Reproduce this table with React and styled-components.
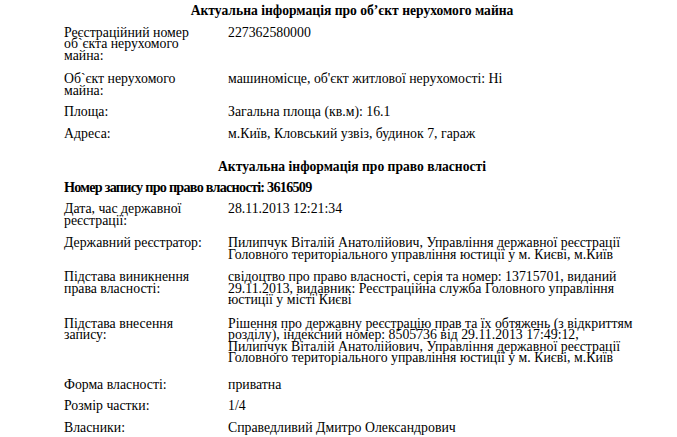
import React from 'react';
import styled, { createGlobalStyle } from 'styled-components';

const GlobalStyle = createGlobalStyle`
  html, body {
    margin: 0;
    padding: 0;
    background: #ffffff;
  }
`;

const Page = styled.div`
  width: 576px;
  margin-left: 64px;
  font-family: "Liberation Serif", "Times New Roman", serif;
  color: #000000;
  font-size: 13.8px;
  line-height: 11.5px;
`;

const Title = styled.div`
  text-align: center;
  font-weight: bold;
  font-size: 13.6px;
  padding: 5px 0;
  margin-top: ${(p) => p.$top || 0}px;
`;

const RecordNo = styled.div`
  font-weight: bold;
  font-size: 14.2px;
  letter-spacing: -0.75px;
  padding: 5px 0;
  margin-top: -1px;
`;

const Row = styled.div`
  display: grid;
  grid-template-columns: 164px 1fr;
  padding: 5px 0;
  margin-top: ${(p) => p.$extra || 0}px;
`;

const Label = styled.div`
  white-space: nowrap;
`;

const Value = styled.div`
  white-space: nowrap;
`;

const lines = (arr) =>
  arr.map((t, i) => (
    <React.Fragment key={i}>
      {i > 0 && <br />}
      {t}
    </React.Fragment>
  ));

const objectRows = [
  { label: ['Реєстраційний номер', 'об`єкта нерухомого', 'майна:'], value: ['227362580000'] },
  { label: ['Об`єкт нерухомого', 'майна:'], value: ["машиномісце, об'єкт житлової нерухомості: Ні"], extra: 2 },
  { label: ['Площа:'], value: ['Загальна площа (кв.м): 16.1'] },
  { label: ['Адреса:'], value: ['м.Київ, Кловський узвіз, будинок 7, гараж'] },
];

const rightRows = [
  { label: ['Дата, час державної', 'реєстрації:'], value: ['28.11.2013 12:21:34'] },
  {
    label: ['Державний реєстратор:'],
    value: [
      'Пилипчук Віталій Анатолійович, Управління державної реєстрації',
      'Головного територіального управління юстиції у м. Києві, м.Київ',
    ],
    extra: 1,
  },
  {
    label: ['Підстава виникнення', 'права власності:'],
    value: [
      'свідоцтво про право власності, серія та номер: 13715701, виданий',
      '29.11.2013, видавник: Реєстраційна служба Головного управління',
      'юстиції у місті Києві',
    ],
    extra: 1,
  },
  {
    label: ['Підстава внесення', 'запису:'],
    value: [
      'Рішення про державну реєстрацію прав та їх обтяжень (з відкриттям',
      'розділу), індексний номер: 8505736 від 29.11.2013 17:49:12,',
      'Пилипчук Віталій Анатолійович, Управління державної реєстрації',
      'Головного територіального управління юстиції у м. Києві, м.Київ',
    ],
    extra: 2,
  },
  { label: ['Форма власності:'], value: ['приватна'], extra: 5 },
  { label: ['Розмір частки:'], value: ['1/4'] },
  { label: ['Власники:'], value: ['Справедливий Дмитро Олександрович'] },
];

const App = () => {
  return (
    <>
      <GlobalStyle />
      <Page>
        <Title>Актуальна інформація про об’єкт нерухомого майна</Title>
        {objectRows.map((r, i) => (
          <Row key={i} $extra={r.extra}>
            <Label>{lines(r.label)}</Label>
            <Value>{lines(r.value)}</Value>
          </Row>
        ))}
        <Title $top={12}>Актуальна інформація про право власності</Title>
        <RecordNo>Номер запису про право власності: 3616509</RecordNo>
        {rightRows.map((r, i) => (
          <Row key={i} $extra={r.extra}>
            <Label>{lines(r.label)}</Label>
            <Value>{lines(r.value)}</Value>
          </Row>
        ))}
      </Page>
    </>
  );
};

export default App;
